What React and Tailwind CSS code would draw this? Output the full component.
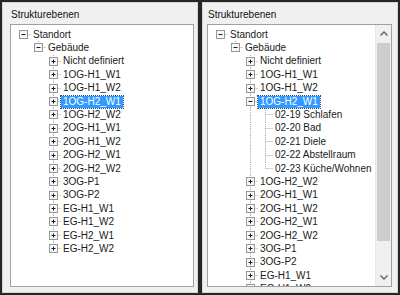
import React from 'react';

const LEAVES = [
    'Nicht definiert', '1OG-H1_W1', '1OG-H1_W2', '1OG-H2_W1', '1OG-H2_W2',
    '2OG-H1_W1', '2OG-H1_W2', '2OG-H2_W1', '2OG-H2_W2', '3OG-P1', '3OG-P2',
    'EG-H1_W1', 'EG-H1_W2', 'EG-H2_W1', 'EG-H2_W2',
];

const ROOMS = ['02-19 Schlafen', '02-20 Bad', '02-21 Diele', '02-22 Abstellraum', '02-23 Küche/Wohnen'];

const buildTree = (expandSelected) => [
    {
        label: 'Standort',
        open: true,
        children: [
            {
                label: 'Gebäude',
                open: true,
                children: LEAVES.map((label) => {
                    const selected = label === '1OG-H2_W1';
                    return {
                        label,
                        selected,
                        kids: true,
                        open: selected && expandSelected,
                        children: selected ? ROOMS.map((r) => ({ label: r })) : null,
                    };
                }),
            },
        ],
    },
];

const flatten = (nodes, level, continues, out) => {
    nodes.forEach((n, i) => {
        const last = i === nodes.length - 1;
        out.push({ ...n, level, continues, first: level === 0 && i === 0, last });
        if (n.open && n.children) flatten(n.children, level + 1, [...continues, !last], out);
    });
    return out;
};

// one 15px column of the tree connector drawing
const Cell = ({ up, down, across, box, open }) => (
    <svg width="15" height="13.4" className="shrink-0 block">
        {up && <line x1="7.5" y1="0" x2="7.5" y2="6.5" stroke="#a8a8a8" strokeDasharray="1 1" />}
        {down && <line x1="7.5" y1="6.5" x2="7.5" y2="13.4" stroke="#a8a8a8" strokeDasharray="1 1" />}
        {across && <line x1="7.5" y1="6.5" x2="15" y2="6.5" stroke="#a8a8a8" strokeDasharray="1 1" />}
        {box && (
            <g>
                <rect x="3.5" y="2.5" width="8" height="8" fill="#f7f7f7" stroke="#969696" />
                <line x1="5.5" y1="6.5" x2="9.5" y2="6.5" stroke="#1e1e1e" />
                {!open && <line x1="7.5" y1="4.5" x2="7.5" y2="8.5" stroke="#1e1e1e" />}
            </g>
        )}
    </svg>
);

const Row = ({ node }) => (
    <div className="flex items-center h-[13.4px] shrink-0">
        {node.continues.map((c, i) => (
            <Cell key={i} down={c} up={c} />
        ))}
        <Cell up={!node.first} down={!node.last} across box={node.kids || node.open} open={node.open} />
        <span
            className={`px-[2px] h-[12px] leading-[12px] whitespace-nowrap ${node.selected
                ? 'bg-[#3399ff] text-white outline outline-1 outline-dotted outline-[#1a4f8a]'
                : 'text-[#1a1a1a]'}`}
        >
            {node.label}
        </span>
    </div>
);

const Panel = ({ expanded }) => {
    const rows = flatten(buildTree(expanded), 0, [], []);
    return (
        <div className="w-[200px] h-[295px] border-2 border-[#262626] flex">
            <div className={`flex-1 flex flex-col border border-[#d6d6d6] ${expanded ? 'pl-[4px] pr-[5px]' : 'pl-[7px] pr-[3px]'} pb-[5px]`}>
                <div className="h-[21px] pt-[6px] pl-[1px] text-[10px] leading-[12px] text-[#111]">Strukturebenen</div>
                <div className="flex-1 flex border border-[#a0a0a0] bg-white overflow-hidden">
                    <div className="flex-1 flex flex-col pt-[3px] pl-[5px] overflow-hidden">
                        {rows.map((n, i) => (
                            <Row key={i} node={n} />
                        ))}
                    </div>
                    {expanded && (
                        <div className="w-[16px] flex flex-col bg-[#f0f0f0] border-l border-[#e8e8e8]">
                            <div className="h-[17px] flex items-center justify-center">
                                <svg width="8" height="5"><polyline points="0.5,4.5 4,1 7.5,4.5" fill="none" stroke="#606060" strokeWidth="1.3" /></svg>
                            </div>
                            <div className="flex-1 px-[1px] pt-[1px]">
                                <div className="h-[198px] bg-[#cdcdcd]" />
                            </div>
                            <div className="h-[17px] flex items-center justify-center">
                                <svg width="8" height="5"><polyline points="0.5,0.5 4,4 7.5,0.5" fill="none" stroke="#606060" strokeWidth="1.3" /></svg>
                            </div>
                        </div>
                    )}
                </div>
            </div>
        </div>
    );
};

export default function App() {
    return (
        <div className="w-[400px] h-[295px] flex bg-[#f0f0f0] font-['Liberation_Sans',Arial,sans-serif] text-[10px] overflow-hidden">
            <Panel expanded={false} />
            <Panel expanded />
        </div>
    );
}
